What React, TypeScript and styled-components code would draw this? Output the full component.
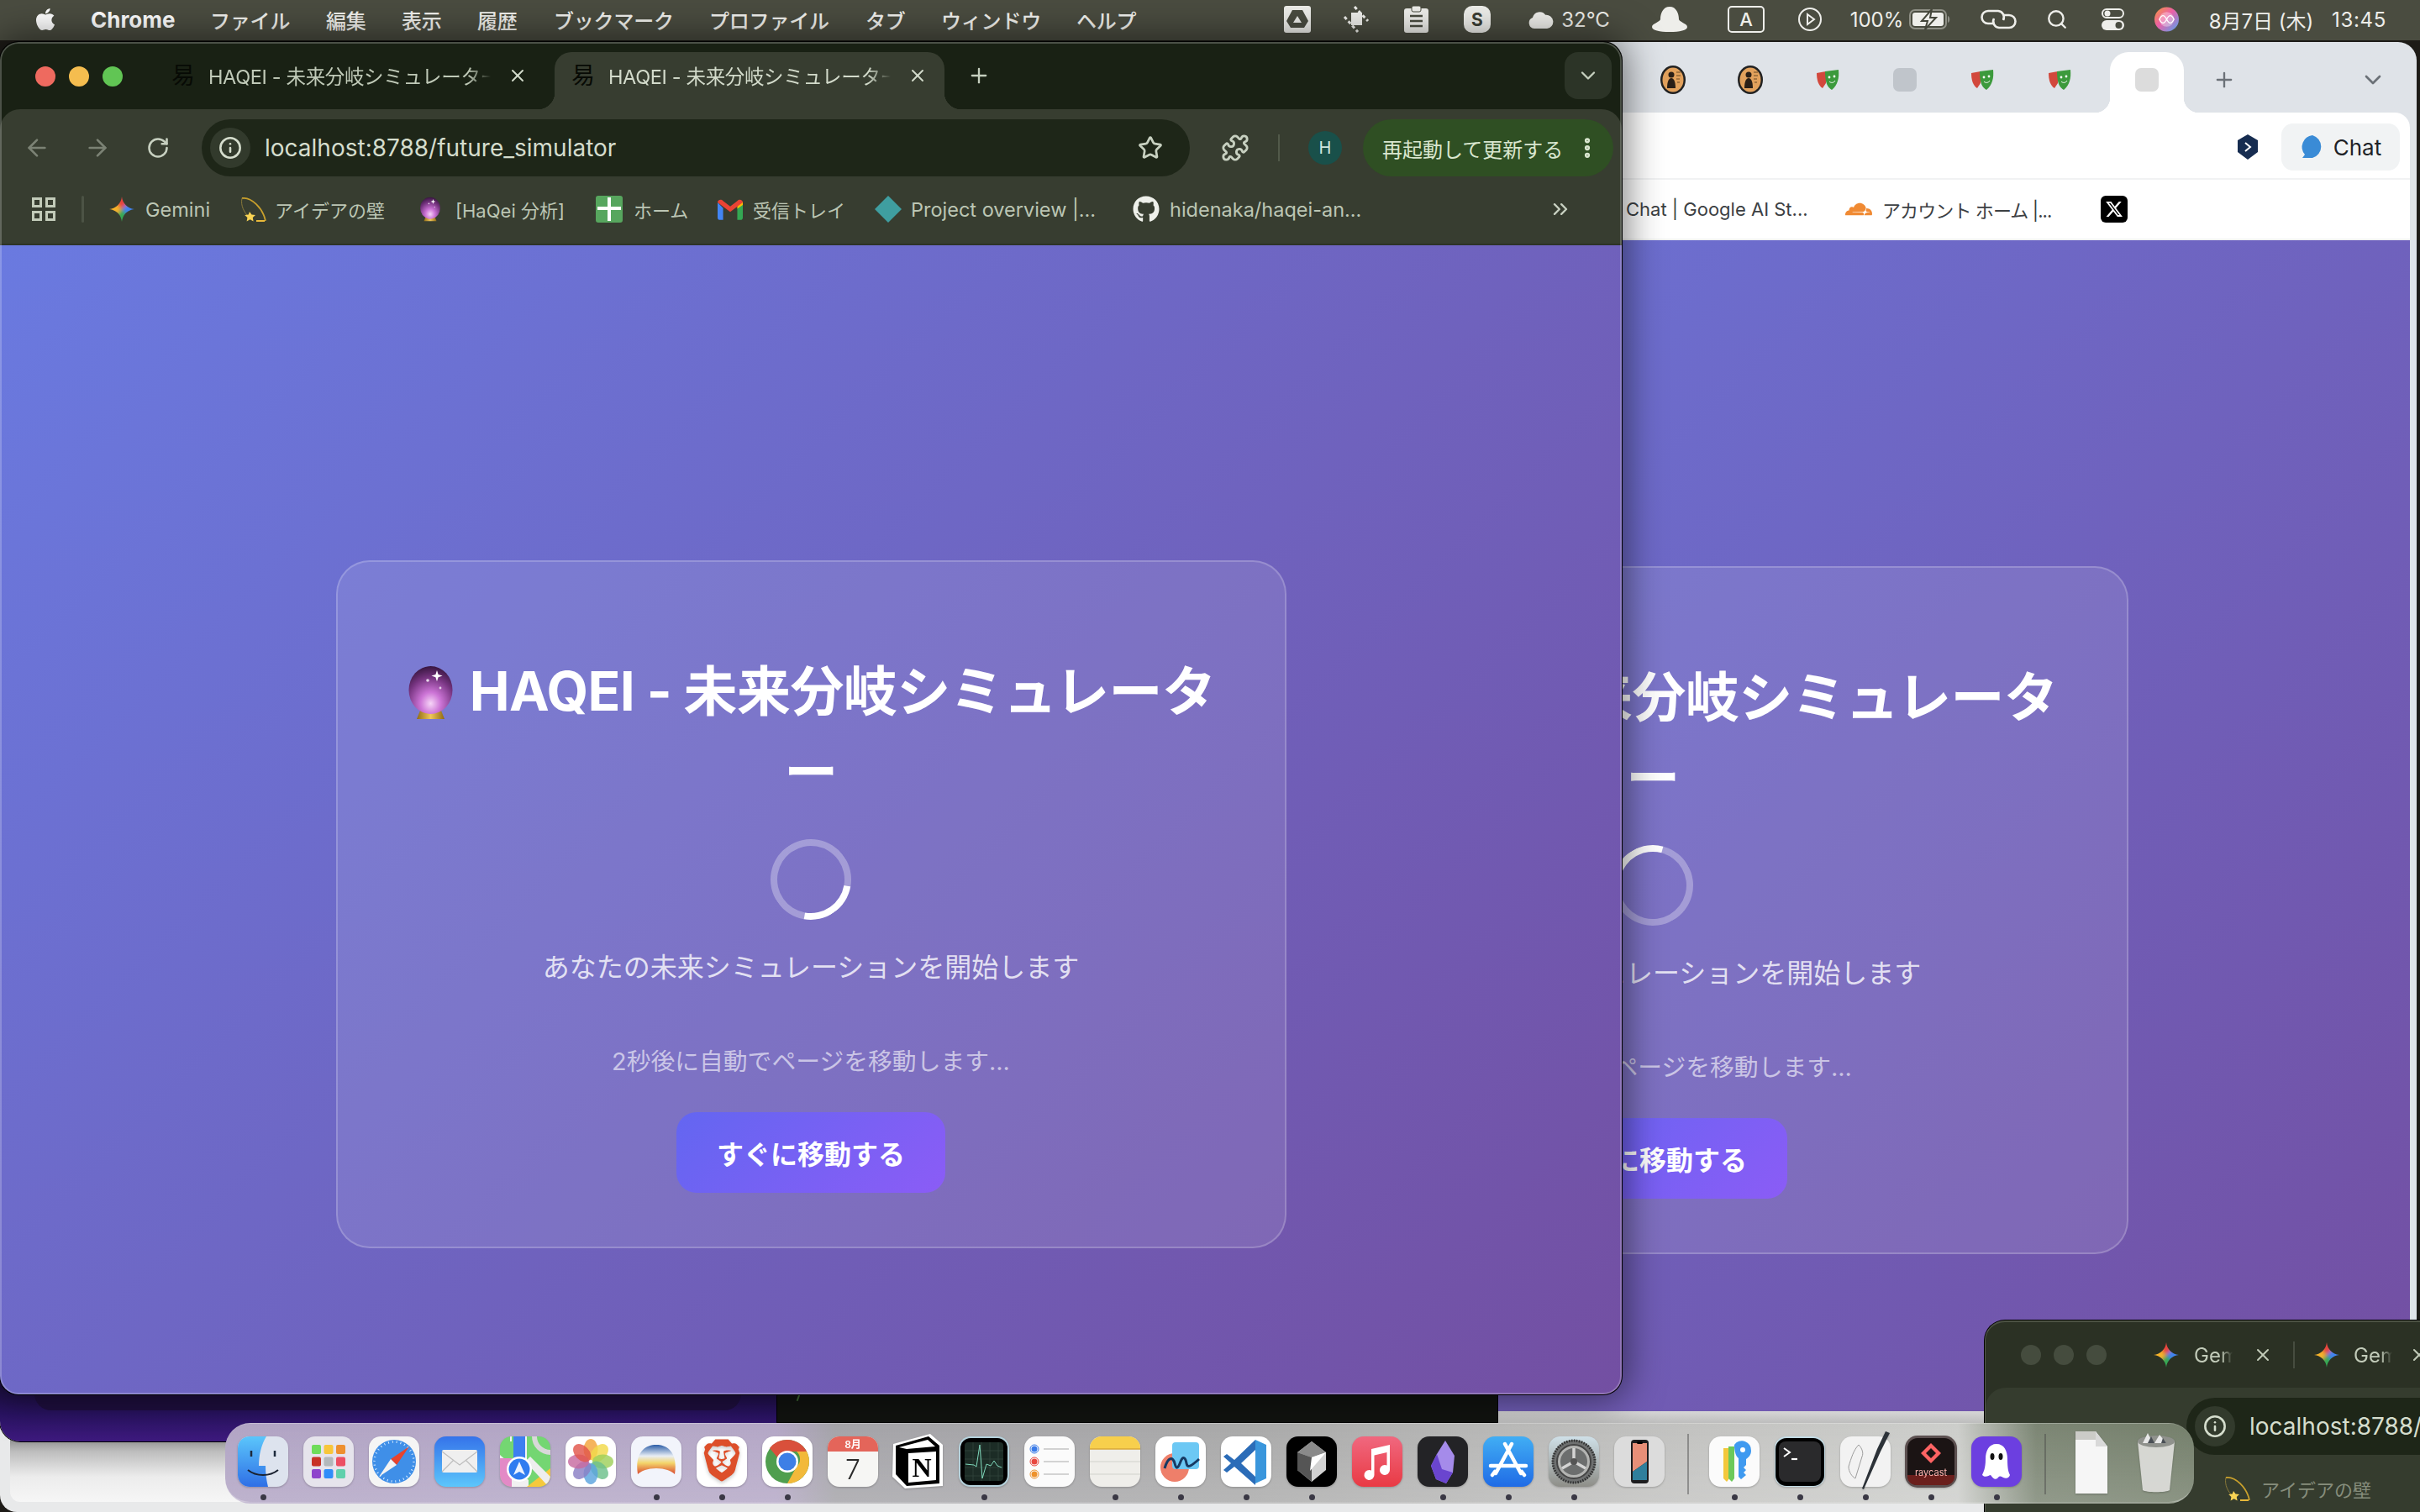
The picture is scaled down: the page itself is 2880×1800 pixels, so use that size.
import React from 'react';
import styled, { createGlobalStyle } from 'styled-components';
import { ArrowLeft, ArrowRight, RotateCw, Info, Star, Puzzle, EllipsisVertical, Plus, X, ChevronDown, ChevronsRight, Search } from 'lucide-react';
import { FaApple, FaGithub } from 'react-icons/fa';
import { FaXTwitter } from 'react-icons/fa6';
import { SiBrave, SiCloudflare } from 'react-icons/si';

const SANS = '"Inter","Noto Sans CJK JP","Noto Sans",sans-serif';

const Global = createGlobalStyle`
  html, body { margin: 0; padding: 0; background: #1d1b17; }
  * { box-sizing: border-box; }
`;

const Desktop = styled.div`
  position: relative;
  width: 2880px;
  height: 1800px;
  overflow: hidden;
  font-family: ${SANS};
  background: #1d1b17;
`;

/* ---------- menu bar ---------- */
const MenuBar = styled.header`
  display: flex;
  align-items: center;
  height: 48px;
  padding: 0 38px 2px 0;
  background: #4a4c40;
  color: #f2f2ee;
  font-size: 24px;
`;
const MenuApple = styled.span`
  display: flex;
  margin-left: 40px;
  width: 28px;
  color: #fff;
`;
const MenuApp = styled.span`
  margin-left: 40px;
  width: 102px;
  font-size: 26px;
  font-weight: 700;
  white-space: nowrap;
  color: #fff;
`;
const MenuLabel = styled.span<{ $w: number; $ml: number }>`
  width: ${p => p.$w}px;
  margin-left: ${p => p.$ml}px;
  white-space: nowrap;
  font-weight: 500;
  letter-spacing: -0.2px;
`;
const MenuRight = styled.div`
  display: flex;
  align-items: center;
  margin-left: auto;
`;
const MenuSlot = styled.span<{ $w: number; $ml: number; $ls?: number }>`
  display: flex;
  align-items: center;
  justify-content: center;
  width: ${p => p.$w}px;
  margin-left: ${p => p.$ml}px;
  letter-spacing: ${p => p.$ls ?? 0}px;
  white-space: nowrap;
  font-weight: 400;
  color: #eeeeea;
`;

/* ---------- windows on the desktop ---------- */
const WhiteBase = styled.section`
  position: absolute;
  left: 0;
  top: 1600px;
  width: 2876px;
  height: 200px;
  background: #e8e9ea;
  border-radius: 0 0 0 20px;
  padding: 0 8px 12px 12px;
`;
const WhitePanel = styled.div`
  height: 100%;
  border-radius: 0 0 12px 12px;
  background: linear-gradient(180deg, #8e8e8e 0, #8e8e8e 60%, #bdbdbd 68%, #ececec 84%, #f6f6f6 100%);
`;
const PurpleWindow = styled.section`
  position: absolute;
  left: 0;
  top: 1500px;
  width: 925px;
  height: 216px;
  border-radius: 0 0 0 24px;
  background: linear-gradient(180deg, #1d0f42 70%, #2a1364 85%, #3e1a7e 100%);
  box-shadow: 0 0 0 1px #000;
  display: flex;
  flex-direction: column;
  justify-content: flex-end;
  padding: 0 43px 37px 41px;
`;
const PurpleInset = styled.div`
  height: 20px;
  background: #1f0f40;
  border-radius: 0 0 20px 20px;
`;
const TerminalWindow = styled.section`
  position: absolute;
  left: 925px;
  top: 1500px;
  width: 857px;
  height: 193px;
  background: #111310;
  box-shadow: 0 0 0 1px #000;
`;
const TerminalTick = styled.i`
  position: absolute;
  left: 24px;
  top: 160px;
  width: 2px;
  height: 8px;
  background: #3f6a33;
  transform: rotate(20deg);
`;

const RightWindow = styled.section`
  position: absolute;
  left: 1066px;
  top: 50px;
  width: 1810px;
  height: 1644px;
  padding-right: 8px;
  background: #dfe3e8;
  border-radius: 0 22px 0 0;
  display: flex;
  flex-direction: column;
`;
const RightFoot = styled.div`
  height: 14px;
  flex-shrink: 0;
  background: linear-gradient(180deg, #d6d6d6, #bdbdbd);
`;
const RightTabs = styled.div`
  display: flex;
  height: 84px;
  padding: 12px 0 0 879px;
  flex-shrink: 0;
  width: 1810px;
`;
const FaviconSlot = styled.div`
  width: 92px;
  display: flex;
  align-items: center;
  justify-content: center;
  padding-bottom: 6px;
`;
const GreyFavicon = styled.i<{ $c: string }>`
  width: 28px;
  height: 28px;
  border-radius: 7px;
  background: ${p => p.$c};
`;
const RightActiveTab = styled.div`
  position: relative;
  width: 88px;
  margin-left: 14px;
  background: #fff;
  border-radius: 22px 22px 0 0;
  display: flex;
  align-items: center;
  justify-content: center;
  padding-bottom: 6px;
  &::before, &::after {
    content: '';
    position: absolute;
    bottom: 0;
    width: 18px;
    height: 18px;
  }
  &::before { left: -18px; background: radial-gradient(circle at 0 0, transparent 18px, #fff 18.5px); }
  &::after { right: -18px; background: radial-gradient(circle at 100% 0, transparent 18px, #fff 18.5px); }
`;
const RightTabTool = styled.div<{ $ml: string; $mr?: number }>`
  width: 48px;
  margin-left: ${p => p.$ml};
  margin-right: ${p => p.$mr ?? 0}px;
  display: flex;
  align-items: center;
  justify-content: center;
  padding-bottom: 6px;
  color: #6b7177;
`;
const RightToolbar = styled.div`
  display: flex;
  align-items: center;
  justify-content: flex-end;
  gap: 27px;
  height: 78px;
  padding: 4px 12px 0 0;
  background: #fff;
  border-radius: 0 18px 0 0;
  flex-shrink: 0;
`;
const ChatButton = styled.div`
  display: flex;
  align-items: center;
  justify-content: center;
  gap: 10px;
  width: 141px;
  height: 56px;
  border-radius: 14px;
  background: #f1f3f4;
  color: #1f2328;
  font-size: 26px;
`;
const RightBookmarks = styled.div`
  display: flex;
  align-items: center;
  height: 74px;
  padding-left: 869px;
  border-top: 2px solid #f1f2f3;
  border-bottom: 2px solid #f1f2f3;
  background: #fff;
  color: #3c4043;
  font-size: 22px;
  flex-shrink: 0;
`;

const ChromeWindow = styled.section`
  position: absolute;
  left: 0;
  top: 50px;
  width: 1930px;
  height: 1610px;
  display: flex;
  flex-direction: column;
  overflow: hidden;
  background: #192114;
  border-radius: 22px;
  box-shadow: 0 0 0 1px #000, 0 0 44px 6px rgba(0, 0, 0, 0.5);
  &::after {
    content: '';
    position: absolute;
    inset: 0;
    border: 2px solid rgba(255, 255, 255, 0.22);
    border-radius: 22px;
    pointer-events: none;
  }
`;
const TabStrip = styled.div`
  display: flex;
  align-items: stretch;
  height: 80px;
  padding: 12px 12px 0 0;
  flex-shrink: 0;
`;
const Lights = styled.div`
  display: flex;
  gap: 16px;
  width: 184px;
  padding: 17px 0 0 42px;
`;
const Light = styled.i<{ $c: string }>`
  width: 24px;
  height: 24px;
  border-radius: 50%;
  background: ${p => p.$c};
`;
const Tab = styled.div<{ $active?: boolean }>`
  position: relative;
  display: flex;
  align-items: center;
  width: 464px;
  margin-right: 12px;
  padding: 0 0 12px 20px;
  color: ${p => (p.$active ? '#d3dbcb' : '#c0cab8')};
  background: ${p => (p.$active ? '#373d30' : 'transparent')};
  border-radius: 20px 20px 0 0;
  font-size: 23.5px;
  ${p => p.$active && `
    &::before, &::after {
      content: '';
      position: absolute;
      bottom: 0;
      width: 20px;
      height: 20px;
    }
    &::before { left: -20px; background: radial-gradient(circle at 0 0, transparent 20px, #373d30 20.5px); }
    &::after { right: -20px; background: radial-gradient(circle at 100% 0, transparent 20px, #373d30 20.5px); }
  `}
`;
const TabFavicon = styled.span`
  width: 26px;
  margin-right: 18px;
  font-size: 28px;
  line-height: 1;
  color: #070a05;
  white-space: nowrap;
  flex-shrink: 0;
`;
const TabTitle = styled.span`
  width: 336px;
  overflow: hidden;
  white-space: nowrap;
  letter-spacing: -0.35px;
  -webkit-mask-image: linear-gradient(90deg, #000 92%, transparent 100%);
  mask-image: linear-gradient(90deg, #000 92%, transparent 100%);
`;
const TabClose = styled.span`
  display: flex;
  margin-left: 20px;
  color: #d3dbcb;
`;
const NewTab = styled.span`
  display: flex;
  align-items: center;
  margin-left: 15px;
  padding-bottom: 12px;
  color: #c5cfbe;
`;
const TabMenu = styled.span`
  display: flex;
  align-items: center;
  justify-content: center;
  margin-left: auto;
  width: 56px;
  height: 56px;
  border-radius: 16px;
  background: #2c3427;
  color: #c5cfbe;
`;
const Toolbar = styled.div`
  display: flex;
  align-items: center;
  height: 80px;
  padding-top: 12px;
  background: #373d30;
  border-radius: 24px 24px 0 0;
  flex-shrink: 0;
`;
const ToolIcon = styled.span<{ $w: number; $ml: number; $dim?: boolean }>`
  display: flex;
  justify-content: center;
  width: ${p => p.$w}px;
  margin-left: ${p => p.$ml}px;
  color: ${p => (p.$dim ? '#7b8274' : '#c7d0c0')};
`;
const AddressBar = styled.div<{ $w: number; $ml: number }>`
  display: flex;
  align-items: center;
  width: ${p => p.$w}px;
  height: 68px;
  margin-left: ${p => p.$ml}px;
  padding: 0 32px 0 10px;
  border-radius: 34px;
  background: #1e2618;
  color: #d5ddcd;
  font-size: 28px;
  white-space: nowrap;
  flex-shrink: 0;
`;
const InfoChip = styled.span`
  display: flex;
  align-items: center;
  justify-content: center;
  width: 48px;
  height: 48px;
  margin-right: 17px;
  border-radius: 50%;
  background: #323a2c;
  color: #d5ddcd;
  flex-shrink: 0;
`;
const AddressStar = styled.span`
  display: flex;
  margin-left: auto;
  color: #c7d0c0;
`;
const ToolDivider = styled.i`
  width: 2px;
  height: 32px;
  margin-left: 33px;
  background: #525a4a;
`;
const Avatar = styled.span`
  display: flex;
  align-items: center;
  justify-content: center;
  width: 40px;
  height: 40px;
  margin-left: 34px;
  border-radius: 50%;
  background: #19504a;
  color: #cfe6df;
  font-size: 20px;
`;
const UpdatePill = styled.div`
  display: flex;
  align-items: center;
  width: 298px;
  height: 68px;
  margin-left: 25px;
  padding-left: 23px;
  border-radius: 34px;
  background: #2f4f23;
  color: #d9e6cf;
  font-size: 24px;
  white-space: nowrap;
`;
const PillDots = styled.span`
  display: flex;
  margin-left: 14px;
`;
const BookmarkBar = styled.div`
  display: flex;
  align-items: center;
  height: 82px;
  padding-bottom: 2px;
  border-bottom: 2px solid #2d3327;
  background: #373d30;
  color: #bcc6b4;
  font-size: 22px;
  flex-shrink: 0;
`;
const AppsIcon = styled.span`
  display: flex;
  margin-left: 38px;
`;
const BarDivider = styled.i`
  width: 3px;
  height: 32px;
  margin-left: 31px;
  background: #4c5345;
  border-radius: 2px;
`;
const MarkIcon = styled.span<{ $w: number; $ml: number }>`
  display: flex;
  align-items: center;
  justify-content: center;
  width: ${p => p.$w}px;
  margin-left: ${p => p.$ml}px;
  flex-shrink: 0;
`;
const MarkBall = styled.span`
  display: block;
  width: 26px;
  height: 30px;
`;
const MarkText = styled.span<{ $ml: number; $w: number; $fs?: number; $ls?: number }>`
  margin-left: ${p => p.$ml}px;
  width: ${p => p.$w}px;
  font-size: ${p => p.$fs ?? 22}px;
  letter-spacing: ${p => p.$ls ?? 0}px;
  white-space: nowrap;
  flex-shrink: 0;
`;
const XBadge = styled.span`
  display: flex;
  align-items: center;
  justify-content: center;
  width: 32px;
  height: 32px;
  border-radius: 6px;
  background: #000;
  color: #fff;
`;
const GradientStage = styled.main<{ $top: number }>`
  flex: 1;
  display: flex;
  justify-content: center;
  align-items: flex-start;
  padding-top: ${p => p.$top}px;
  background: linear-gradient(135deg, #6a7ae0 0%, #734fa2 100%);
  overflow: hidden;
`;
const Card = styled.div`
  width: 1131px;
  height: 819px;
  padding: 106px 64px 0;
  border: 2px solid rgba(255, 255, 255, 0.2);
  border-radius: 40px;
  background: rgba(255, 255, 255, 0.1);
  color: #fff;
  display: flex;
  flex-direction: column;
  align-items: center;
  text-align: center;
  flex-shrink: 0;
`;
const Title = styled.h1`
  margin: 0;
  font-size: 64px;
  line-height: 96px;
  font-weight: 700;
  letter-spacing: -0.6px;
  white-space: nowrap;
  font-family: ${SANS};
`;
const TitleBall = styled.span`
  display: inline-block;
  width: 57px;
  height: 63px;
  margin-right: 18px;
  vertical-align: -10px;
`;
const Spinner = styled.div<{ $angle: number }>`
  width: 96px;
  height: 96px;
  margin-top: 32px;
  border: 8px solid rgba(255, 255, 255, 0.3);
  border-top-color: #fff;
  border-radius: 50%;
  transform: rotate(${p => p.$angle}deg);
  flex-shrink: 0;
`;
const Subtitle = styled.p`
  margin: 33px 0 0;
  font-size: 32px;
  line-height: 48px;
  font-weight: 400;
  color: rgba(255, 255, 255, 0.8);
`;
const Redirect = styled.p`
  margin: 66px 0 0;
  font-size: 28.8px;
  line-height: 43px;
  color: rgba(255, 255, 255, 0.6);
`;
const GoButton = styled.button`
  width: 320px;
  height: 96px;
  margin-top: 39px;
  border: 0;
  border-radius: 24px;
  color: #fff;
  font-family: ${SANS};
  font-size: 32px;
  font-weight: 700;
  background: linear-gradient(135deg, #6366f1 0%, #8b5cf6 100%);
`;

/* small window at the bottom right */
const SmallWindow = styled.section`
  position: absolute;
  left: 2362px;
  top: 1572px;
  width: 560px;
  height: 240px;
  overflow: hidden;
  background: #2b3124;
  border-top: 2px solid #4b5143;
  border-left: 1px solid #55594c;
  border-radius: 24px 0 0 0;
  box-shadow: 0 0 0 1px #000;
  color: #c2cbb9;
`;
const SmallTabs = styled.div`
  display: flex;
  align-items: center;
  height: 78px;
  padding-left: 42px;
  font-size: 24px;
`;
const SmallLight = styled.i`
  width: 24px;
  height: 24px;
  margin-right: 15px;
  border-radius: 50%;
  background: #454c3e;
`;
const SmallTabText = styled.span<{ $ml: number }>`
  width: 46px;
  margin-left: ${p => p.$ml}px;
  overflow: hidden;
  white-space: nowrap;
  -webkit-mask-image: linear-gradient(90deg, #000 70%, transparent 100%);
  mask-image: linear-gradient(90deg, #000 70%, transparent 100%);
`;
const SmallDivider = styled.i`
  width: 2px;
  height: 32px;
  margin-left: 24px;
  background: #474d40;
`;
const SmallToolbar = styled.div`
  display: flex;
  align-items: center;
  height: 80px;
  padding: 12px 0 0 239px;
  background: #353c2e;
  border-radius: 24px 0 0 0;
`;
const SmallMarks = styled.div`
  display: flex;
  align-items: center;
  height: 80px;
  background: #353c2e;
  color: #868d7c;
  font-size: 22px;
`;

/* ---------- dock ---------- */
const Dock = styled.nav`
  position: absolute;
  left: 268px;
  top: 1694px;
  width: 2343px;
  height: 96px;
  display: flex;
  gap: 18px;
  padding: 15px 0 0 15px;
  border-radius: 30px;
  background:
    linear-gradient(180deg, rgba(255, 255, 255, 0) 0%, rgba(255, 255, 255, 0.16) 100%),
    linear-gradient(90deg, #b1a4c4 0%, #b4a7c6 28%, #a4a3a8 31%, #a9a9a9 52%, #c2c2c0 74%, #cdcecb 88%, #7c8674 92%, #75806c 100%);
  border-top: 1px solid rgba(255, 255, 255, 0.12);
  border-bottom: 2px solid rgba(255, 255, 255, 0.28);
`;
const DockTile = styled.div`
  width: 60px;
  display: flex;
  flex-direction: column;
  align-items: center;
  gap: 9px;
  flex-shrink: 0;
  svg { display: block; overflow: visible; filter: drop-shadow(0 1px 1px rgba(0, 0, 0, 0.22)); }
`;
const DockDot = styled.i<{ $on: boolean }>`
  width: 7px;
  height: 7px;
  border-radius: 50%;
  background: ${p => (p.$on ? '#3a3845' : 'transparent')};
`;
const DockDivider = styled.i<{ $mr: number }>`
  width: 2px;
  height: 72px;
  margin: -3px ${p => p.$mr}px 0 9px;
  background: rgba(70, 70, 70, 0.45);
  flex-shrink: 0;
`;

/* ---------- drawings ---------- */
const Crystal = () => (
  <svg viewBox="0 0 57 63" width="100%" height="100%">
    <defs>
      <radialGradient id="ballFill" cx="50%" cy="78%" r="78%">
        <stop offset="0" stopColor="#f6d4f7" />
        <stop offset="0.3" stopColor="#cc74d6" />
        <stop offset="0.7" stopColor="#75337f" />
        <stop offset="1" stopColor="#37163f" />
      </radialGradient>
      <linearGradient id="ballBase" x1="0" x2="1">
        <stop offset="0" stopColor="#8f6a14" />
        <stop offset="0.5" stopColor="#f0c75a" />
        <stop offset="1" stopColor="#8f6a14" />
      </linearGradient>
    </defs>
    <path d="M16 53h25l4 10H12z" fill="url(#ballBase)" />
    <ellipse cx="28.500" cy="28.500" rx="26" ry="28.500" fill="url(#ballFill)" />
    <path d="M36 5l1.600 5 5 1.600-5 1.600-1.600 5-1.600-5-5-1.600 5-1.600z" fill="#fff" />
    <circle cx="25" cy="17" r="1.800" fill="#fff" opacity="0.8" />
    <circle cx="40" cy="26" r="1.400" fill="#fff" opacity="0.7" />
  </svg>
);
const Gem = ({ s }: { s: number }) => (
  <svg viewBox="0 0 24 24" width={s} height={s}>
    <defs>
      <clipPath id="gemClip">
        <path d="M12 0C12.600 6.500 17.500 11.400 24 12C17.500 12.600 12.600 17.500 12 24C11.400 17.500 6.500 12.600 0 12C6.500 11.400 11.400 6.500 12 0Z" />
      </clipPath>
      <filter id="gemBlur" x="-20%" y="-20%" width="140%" height="140%"><feGaussianBlur stdDeviation="1.600" /></filter>
    </defs>
    <g clipPath="url(#gemClip)">
      <g filter="url(#gemBlur)">
        <path d="M12 12L-2-2h28z" fill="#e8453c" />
        <path d="M12 12L26-2v28z" fill="#3f83f0" />
        <path d="M12 12l14 14H-2z" fill="#34a853" />
        <path d="M12 12L-2 26V-2z" fill="#f7b32b" />
      </g>
    </g>
  </svg>
);
const WallMark = () => (
  <svg viewBox="0 0 32 32" width="32" height="32">
    <path d="M3 3C14 1 28 15 31 30" fill="none" stroke="#c9a02c" strokeWidth="1.800" />
    <path d="M3 3C1 12 6 20 10 24" fill="none" stroke="#8a7a3a" strokeWidth="1" />
    <path d="M12 19l2.500 3.500 4.500.5-3.200 3 .8 4.500-4-2.200-4 2.200 .8-4.500-3.200-3 4.500-.5z" fill="#f7d354" />
    <path d="M20 29h10v2H20z" fill="#e8b93a" />
  </svg>
);
const Grid4 = () => (
  <svg viewBox="0 0 28 28" width="28" height="28" fill="none" stroke="#c2cbb9" strokeWidth="3">
    <rect x="1.500" y="1.500" width="9" height="9" />
    <rect x="17.500" y="1.500" width="9" height="9" />
    <rect x="1.500" y="17.500" width="9" height="9" />
    <rect x="17.500" y="17.500" width="9" height="9" />
  </svg>
);
const SheetMark = () => (
  <svg viewBox="0 0 32 32" width="32" height="32">
    <rect width="32" height="32" rx="3" fill="#57a65e" />
    <path d="M14 2h4v11h12v4H18v13h-4V17H2v-4h12z" fill="#fff" />
  </svg>
);
const GmailMark = () => (
  <svg viewBox="0 0 32 26" width="30" height="25">
    <path d="M0 4v19a3 3 0 0 0 3 3h4V11z" fill="#4285f4" />
    <path d="M32 4v19a3 3 0 0 1-3 3h-4V11z" fill="#34a853" />
    <path d="M25 3l7 0-0 4-7 5z" fill="#fbbc04" />
    <path d="M0 4c0-3 4-5 7-2l9 7 9-7c3-3 7-1 7 2l-16 12z" fill="#ea4335" />
  </svg>
);
const Diamond = () => (
  <svg viewBox="0 0 32 32" width="32" height="32"><path d="M16 0l16 16-16 16L0 16z" fill="#3f9ea0" /></svg>
);
const PortraitFav = () => (
  <svg viewBox="0 0 30 34" width="30" height="34">
    <ellipse cx="15" cy="17" rx="15" ry="17" fill="#222" />
    <ellipse cx="15" cy="17" rx="12.500" ry="14.500" fill="#e2a15c" />
    <circle cx="13" cy="11" r="3.500" fill="#2a1f17" />
    <path d="M8 27c0-8 2-12 5-12s5 4 5 12z" fill="#2a1f17" />
    <path d="M19 8h5M19 12h5M19 16h4M20 20h3" stroke="#6b4a25" strokeWidth="1" />
  </svg>
);
const ShieldFav = () => (
  <svg viewBox="0 0 28 24" width="28" height="24">
    <path d="M1 4l11-2v14l-4 6C3 19 1 12 1 4z" fill="#d2483c" />
    <path d="M11 2l16-2c1 10-1 18-8 24-5-3-8-8-8-22z" fill="#3c9a3c" />
    <circle cx="16" cy="9" r="1.400" fill="#fff" />
    <circle cx="22" cy="8" r="1.400" fill="#fff" />
    <path d="M16 14c2 2 5 2 7-1" stroke="#fff" fill="none" strokeWidth="1" />
  </svg>
);
const HexLogo = () => (
  <svg viewBox="0 0 26 30" width="26" height="30">
    <path d="M13 0l12 7v14l-12 9-12-9V7z" fill="#162c50" />
    <path d="M10 10l6 5-6 5" fill="none" stroke="#fff" strokeWidth="2" />
  </svg>
);
const ChatBubble = () => (
  <svg viewBox="0 0 30 30" width="30" height="30">
    <path d="M15 1a14 14 0 0 1 0 27H3l3-4A14 14 0 0 1 15 1z" fill="#3a8bd6" />
  </svg>
);

/* menu bar icons */
const MI = styled.svg`
  display: block;
  fill: #eeeeea;
`;
const DriveGlyph = () => (
  <MI viewBox="0 0 32 32" width="32" height="32">
    <rect width="32" height="32" rx="3" />
    <path d="M10 5h12l7 13-5 8H8L3 18z" fill="#4a4c40" />
    <path d="M16 12l5 8H11z" fill="#eeeeea" />
  </MI>
);
const RotateGlyph = () => (
  <MI viewBox="0 0 32 32" width="32" height="32">
    <rect x="10" y="8" width="13" height="15" />
    <path d="M14 1l16 17M2 13l16 18" stroke="#eeeeea" strokeWidth="3" strokeDasharray="4 3" fill="none" />
  </MI>
);
const ClipGlyph = () => (
  <MI viewBox="0 0 29 32" width="29" height="32">
    <rect y="3" width="29" height="29" rx="3" />
    <rect x="9" width="11" height="7" rx="2" stroke="#4a4c40" />
    <path d="M7 12h15M7 18h15M7 24h15" stroke="#4a4c40" strokeWidth="2.500" />
  </MI>
);
const SGlyph = styled.span`
  display: flex;
  align-items: center;
  justify-content: center;
  width: 32px;
  height: 32px;
  border-radius: 10px;
  background: #eeeeea;
  color: #3d3f35;
  font-size: 21px;
  font-weight: 700;
`;
const CloudGlyph = () => (
  <MI viewBox="0 0 32 22" width="31" height="21">
    <path d="M8 22a7 7 0 0 1-2-13.500A9 9 0 0 1 22 5a8 8 0 0 1 2 17z" />
  </MI>
);
const BellGlyph = () => (
  <MI viewBox="0 0 42 30" width="42" height="30">
    <path d="M21 0c8 0 11 8 11 15 0 3 10 5 10 9 0 4-9 6-21 6S0 28 0 24c0-4 10-6 10-9C10 8 13 0 21 0z" />
  </MI>
);
const AGlyph = styled.span`
  display: flex;
  align-items: center;
  justify-content: center;
  width: 44px;
  height: 32px;
  border: 2px solid #eeeeea;
  border-radius: 5px;
  font-size: 22px;
  font-weight: 500;
`;
const PlayGlyph = () => (
  <svg viewBox="0 0 28 28" width="28" height="28" fill="none" stroke="#eeeeea" strokeWidth="2">
    <circle cx="14" cy="14" r="13" />
    <path d="M11 8l8 6-8 6z" />
  </svg>
);
const BatteryGlyph = () => (
  <svg viewBox="0 0 50 24" width="50" height="24">
    <rect x="1" y="1" width="43" height="22" rx="6" fill="none" stroke="#8f9086" strokeWidth="2" />
    <rect x="4" y="4" width="37" height="16" rx="3" fill="#eeeeea" />
    <path d="M46 8c3 1 3 7 0 8z" fill="#8f9086" />
    <path d="M27 0L15 14h7l-3 10 13-14h-7z" fill="#eeeeea" stroke="#44463a" strokeWidth="2" />
  </svg>
);
const LinkGlyph = () => (
  <svg viewBox="0 0 43 24" width="43" height="24" fill="none" stroke="#eeeeea" strokeWidth="2.600">
    <path d="M15 17H9A7.500 7.500 0 0 1 9 2h12a7.500 7.500 0 0 1 6 11" />
    <path d="M28 7h6a7.500 7.500 0 0 1 0 15H22a7.500 7.500 0 0 1-6-11" />
  </svg>
);
const ControlGlyph = () => (
  <svg viewBox="0 0 27 26" width="27" height="26">
    <rect x="1" y="1" width="25" height="10" rx="5" fill="none" stroke="#eeeeea" strokeWidth="2" />
    <circle cx="7" cy="6" r="3.500" fill="#eeeeea" />
    <rect y="14" width="27" height="12" rx="6" fill="#eeeeea" />
    <circle cx="20.500" cy="20" r="4" fill="#4a4c40" />
  </svg>
);
const SiriGlyph = () => (
  <svg viewBox="0 0 30 30" width="29" height="30">
    <defs>
      <linearGradient id="siriG" x1="0" y1="0" x2="1" y2="1">
        <stop offset="0" stopColor="#f59a3a" />
        <stop offset="0.45" stopColor="#ec5fa6" />
        <stop offset="1" stopColor="#4da8f5" />
      </linearGradient>
    </defs>
    <circle cx="15" cy="15" r="15" fill="url(#siriG)" />
    <circle cx="15" cy="15" r="9" fill="#fff" opacity="0.35" />
    <path d="M6 15c3-6 6-6 9 0s6 6 9 0c-3-6-6-6-9 0s-6 6-9 0z" fill="none" stroke="#fff" strokeWidth="1.400" />
  </svg>
);

/* dock icons, all on a 60 unit tile */
const Tile = ({ bg, children }: { bg: string; children?: React.ReactNode }) => (
  <svg viewBox="0 0 60 60" width="60" height="60">
    <rect width="60" height="60" rx="14" fill={bg} />
    {children}
  </svg>
);
const Finder = () => (
  <svg viewBox="0 0 60 60" width="60" height="60">
    <defs>
      <linearGradient id="fBlue" x1="0" x2="0" y1="0" y2="1"><stop offset="0" stopColor="#5bc6fb" /><stop offset="1" stopColor="#2f6fe6" /></linearGradient>
    </defs>
    <rect width="60" height="60" rx="14" fill="#dde3ee" />
    <path d="M14 0h20c-6 10-9 22-9 35h8c0 9 1 17 3 25H14A14 14 0 0 1 0 46V14A14 14 0 0 1 14 0z" fill="url(#fBlue)" />
    <path d="M16 17v7M44 17v7" stroke="#1d2a3c" strokeWidth="2.500" />
    <path d="M12 40c10 8 26 8 36 0" fill="none" stroke="#1a2230" strokeWidth="2" />
  </svg>
);
const Launchpad = () => {
  const cols = ['#6fdc5a', '#f8c63a', '#ee8f2f', '#c83226', '#b3b8bb', '#ec4f63', '#8e44cc', '#2f8dfa', '#5fd0ac'];
  return (
    <Tile bg="#e6e4ec">
      {cols.map((c, i) => <rect key={c} x={10 + (i % 3) * 14.500} y={10 + Math.floor(i / 3) * 14.500} width="11" height="11" rx="2" fill={c} />)}
    </Tile>
  );
};
const Safari = () => (
  <Tile bg="#f5f5f5">
    <circle cx="30" cy="30" r="26" fill="#3f8fe8" />
    <circle cx="30" cy="30" r="23.500" fill="none" stroke="#d8ecff" strokeWidth="2.500" strokeDasharray="1 3.900" />
    <path d="M48 12L26 27l7 7z" fill="#e8432e" />
    <path d="M12 48l14-21 7 7z" fill="#f3f3f3" />
  </Tile>
);
const Mail = () => (
  <svg viewBox="0 0 60 60" width="60" height="60">
    <defs><linearGradient id="mailB" x1="0" x2="0" y1="0" y2="1"><stop offset="0" stopColor="#3573ea" /><stop offset="1" stopColor="#5cc6fb" /></linearGradient></defs>
    <rect width="60" height="60" rx="14" fill="url(#mailB)" />
    <rect x="9" y="16" width="42" height="27" rx="2" fill="#efefef" />
    <path d="M9 18l21 16 21-16M9 42l14-14M51 42L37 28" fill="none" stroke="#bdbdbd" strokeWidth="1.200" />
  </svg>
);
const Maps = () => (
  <svg viewBox="0 0 60 60" width="60" height="60">
    <clipPath id="mapC"><rect width="60" height="60" rx="14" /></clipPath>
    <g clipPath="url(#mapC)">
      <rect width="60" height="60" fill="#74d672" />
      <path d="M0 22l34 30v8H14L0 46z" fill="#f1f1f1" />
      <path d="M0 26h14v34H0z" fill="#e38ac6" />
      <path d="M32 60l28-22v22z" fill="#f5c93c" />
      <path d="M16 0h14v30H16z" fill="#3d7ff0" />
      <path d="M12 0v6l2 0V0zM32 0h-2v30h2z" fill="#f3f3f3" />
      <path d="M38 0a22 22 0 0 0 22 22v-6A16 16 0 0 1 44 0z" fill="#d8d8d8" />
      <path d="M58 60L30 30l6-6 24 24z" fill="#eeeeee" />
    </g>
    <circle cx="23" cy="39" r="15" fill="#fff" />
    <circle cx="23" cy="39" r="12.500" fill="#2f7cf0" />
    <path d="M23 30l7 16-7-4-7 4z" fill="#eaf2ff" />
  </svg>
);
const Photos = () => {
  const cols = ['#f3a33a', '#f2d94a', '#9fcf5a', '#6cc08b', '#5aa4de', '#8a7fc4', '#c76aa0', '#e2564b'];
  return (
    <Tile bg="#fff">
      {cols.map((c, i) => <ellipse key={c} cx="30" cy="15.500" rx="8.500" ry="12.500" fill={c} opacity="0.82" transform={`rotate(${i * 45} 30 30)`} />)}
    </Tile>
  );
};
const Dome = () => (
  <svg viewBox="0 0 60 60" width="60" height="60">
    <defs><linearGradient id="domeG" x1="0" x2="0" y1="0" y2="1">
      <stop offset="0" stopColor="#2d5ea8" /><stop offset="0.38" stopColor="#e8eef5" /><stop offset="0.62" stopColor="#f4d56a" /><stop offset="1" stopColor="#d9482f" />
    </linearGradient></defs>
    <rect width="60" height="60" rx="14" fill="#f2f4fb" />
    <path d="M8 45C4 20 16 10 30 10s26 10 22 35c-4-4-12-7-22-7s-18 3-22 7z" fill="url(#domeG)" />
  </svg>
);
const Brave = () => (
  <Tile bg="#fff"><g transform="translate(5 3.500) scale(2.080)"><SiBrave size={24} color="#dd4f2a" /></g></Tile>
);
const ChromeMark = () => (
  <Tile bg="#fff">
    <circle cx="30" cy="30" r="26" fill="#4f9e4f" />
    <path d="M30 4a26 26 0 0 1 23 14H30a12 12 0 0 0-11 8L9 14A26 26 0 0 1 30 4z" fill="#d9503b" />
    <path d="M53 18a26 26 0 0 1-23 38l11-20a12 12 0 0 0 0-18z" fill="#f2b93a" />
    <circle cx="30" cy="30" r="13" fill="#fff" />
    <circle cx="30" cy="30" r="10.500" fill="#3d7fe6" />
  </Tile>
);
const CalendarIcon = () => (
  <svg viewBox="0 0 60 60" width="60" height="60">
    <rect width="60" height="60" rx="14" fill="#f6f6f4" />
    <path d="M0 18V14A14 14 0 0 1 14 0h32a14 14 0 0 1 14 14v4z" fill="#e4655a" />
    <text x="30" y="14" textAnchor="middle" fontSize="12" fontWeight="600" fill="#fff" fontFamily={SANS}>8月</text>
    <text x="30" y="51" textAnchor="middle" fontSize="32" fontWeight="300" fill="#2a2a2a" fontFamily={SANS}>7</text>
  </svg>
);
const Notion = () => (
  <svg viewBox="0 0 60 60" width="60" height="60">
    <path d="M0 9L44-3l15 13 0 49-45 3L-1 48z" fill="#fff" />
    <path d="M3 11L42 0l13 11v45l-39 3L3 45z" fill="#000" />
    <path d="M7 13l34-9 9 8-34 3zM18 20l33-2v34l-33 3z" fill="#fff" />
    <text x="34" y="48" textAnchor="middle" fontSize="32" fontWeight="700" fontFamily='"Liberation Serif",serif' fill="#000">N</text>
  </svg>
);
const Activity = () => (
  <svg viewBox="0 0 60 60" width="60" height="60">
    <rect x="0" y="0" width="60" height="60" rx="14" fill="#b5d2dc" />
    <rect x="2" y="2" width="56" height="56" rx="12" fill="#000" />
    <rect x="7" y="7" width="46" height="46" rx="4" fill="#1c2c26" />
    <path d="M7 17h46M7 27h46M7 37h46M7 47h46M17 7v46M27 7v46M37 7v46M47 7v46" stroke="#35493f" strokeWidth="0.700" />
    <path d="M8 33l10 1 3 2 4-26 3 40 5-17 5 2 4-6 4 6 5 2" fill="none" stroke="#7fd8bb" strokeWidth="1" />
  </svg>
);
const Reminders = () => (
  <Tile bg="#fbfbfb">
    {[['#3a7be8', 15], ['#e8473f', 30], ['#ee922c', 45]].map(([c, y]) => (
      <g key={String(c)}>
        <circle cx="12" cy={Number(y)} r="5" fill="none" stroke={String(c)} strokeWidth="1" />
        <circle cx="12" cy={Number(y)} r="3.500" fill={String(c)} />
        <path d={`M23 ${y}h30`} stroke="#c9c9c9" strokeWidth="1.600" />
      </g>
    ))}
  </Tile>
);
const Notes = () => (
  <svg viewBox="0 0 60 60" width="60" height="60">
    <rect width="60" height="60" rx="14" fill="#efeeea" />
    <path d="M0 15A14 14 0 0 1 14 0h32a14 14 0 0 1 14 14v1z" fill="#f7cf4c" />
    <path d="M0 15h60" stroke="#d9a83a" strokeWidth="1.500" />
    <path d="M0 30h60M0 45h60" stroke="#dcdbd6" strokeWidth="1.500" />
  </svg>
);
const Freeform = () => (
  <Tile bg="#fff">
    <circle cx="23" cy="37" r="17" fill="#ee7f6a" />
    <rect x="20" y="7" width="32" height="32" rx="4" fill="#6cc8f4" />
    <path d="M11 38c4-14 10-14 12-6s4 6 7-2 6-4 7 2 5 4 15-5" fill="none" stroke="#173a63" strokeWidth="3" />
  </Tile>
);
const VSCode = () => (
  <Tile bg="#fff">
    <path d="M41 4l13 6v40l-13 6z" fill="#3a96dc" />
    <path d="M41 4L16 28 7 21l-4 3 9 8-9 8 4 3 9-7 25 22 0-10-17-16 17-16z" fill="#2b6cb8" />
  </Tile>
);
const Cursor = () => (
  <Tile bg="#000">
    <path d="M30 6l17 13v21L30 54 13 40V19z" fill="#d2d2d2" />
    <path d="M30 6l17 13-17 6-17-6z" fill="#8a8a8a" />
    <path d="M13 19l17 6 0 29-17-14z" fill="#555" />
    <path d="M47 19L30 25l-2 16z" fill="#fff" />
  </Tile>
);
const Music = () => (
  <svg viewBox="0 0 60 60" width="60" height="60">
    <defs><linearGradient id="musG" x1="0" x2="0" y1="0" y2="1"><stop offset="0" stopColor="#f0687f" /><stop offset="1" stopColor="#e93a44" /></linearGradient></defs>
    <rect width="60" height="60" rx="14" fill="url(#musG)" />
    <path d="M23 15l22-5v30a6 6 0 1 1-3.500-5.500V19l-15 3.500V46a6 6 0 1 1-3.500-5.500z" fill="#fff" />
  </svg>
);
const Obsidian = () => (
  <Tile bg="#232326">
    <path d="M33 5l11 18-2 20-8 13-12-5-6-16 7-14z" fill="#a58bea" />
    <path d="M23 21l6 18 13 4-8 13-12-5-6-16z" fill="#6a45cf" />
  </Tile>
);
const AppStore = () => (
  <svg viewBox="0 0 60 60" width="60" height="60">
    <defs><linearGradient id="asG" x1="0" x2="0" y1="0" y2="1"><stop offset="0" stopColor="#41aef4" /><stop offset="1" stopColor="#1f6be6" /></linearGradient></defs>
    <rect width="60" height="60" rx="14" fill="url(#asG)" />
    <path d="M26 9l19 35M34 9L15 44M9 35h42M11 46l3-4M49 46l-3-4" stroke="#fff" strokeWidth="4.500" strokeLinecap="round" fill="none" />
  </svg>
);
const Gear = () => (
  <svg viewBox="0 0 60 60" width="60" height="60">
    <defs><linearGradient id="gearB" x1="0" x2="0" y1="0" y2="1"><stop offset="0" stopColor="#cfe0e8" /><stop offset="1" stopColor="#8e8e88" /></linearGradient></defs>
    <rect width="60" height="60" rx="14" fill="url(#gearB)" />
    <circle cx="30" cy="30" r="26" fill="#6e7070" />
    <circle cx="30" cy="30" r="25" fill="none" stroke="#2f3030" strokeWidth="3" strokeDasharray="1.500 1.500" />
    <circle cx="30" cy="30" r="20" fill="#b3b4b2" stroke="#444" strokeWidth="2" />
    <circle cx="30" cy="30" r="16" fill="#6c6e6e" />
    <path d="M30 30V14M30 30L16 38M30 30l14 8" stroke="#d4d4d4" strokeWidth="3.500" />
    <circle cx="30" cy="30" r="4" fill="#555" />
  </svg>
);
const Mirroring = () => (
  <Tile bg="#dcdcdc">
    <rect x="20" y="4" width="21" height="52" rx="4" fill="#1d1d1f" />
    <path d="M22 8h17v22L22 42z" fill="#e88f78" />
    <path d="M22 42l17-12v22H22z" fill="#2f7f9c" />
    <rect x="27" y="6" width="7" height="3" rx="1.500" fill="#000" />
  </Tile>
);
const Passwords = () => (
  <Tile bg="#fbfbfb">
    <path d="M17 14v36l4 4 3-4V14z" fill="#f3c83b" />
    <path d="M23 12v38l4 4 3-4V12z" fill="#6cc95a" />
    <path d="M30 10a11 11 0 0 1 20 7c0 5-3 8-6 10v7l-3 3 3 3-3 3 3 3-6 5-3-3V26c-3-2-5-8-5-16z" fill="#3f9af0" />
    <circle cx="40" cy="16" r="3" fill="#fff" />
  </Tile>
);
const Terminal = () => (
  <svg viewBox="0 0 60 60" width="60" height="60">
    <rect width="60" height="60" rx="14" fill="#c3dbe4" />
    <rect x="1" y="2" width="58" height="57" rx="13" fill="#000" />
    <rect x="5" y="6" width="50" height="48" rx="8" fill="#2a2a2c" />
    <path d="M11 14l7 5-7 5" fill="none" stroke="#fff" strokeWidth="2" />
    <path d="M20 27h7" stroke="#fff" strokeWidth="2.200" />
  </svg>
);
const ScriptPen = () => (
  <svg viewBox="0 0 60 60" width="60" height="60">
    <rect width="60" height="60" rx="14" fill="#f2f2f2" />
    <path d="M10 36c3-10 6-20 12-26 4 4 6 10 4 14l-8 26c-4-2-8-8-8-14z" fill="none" stroke="#9c9c9c" strokeWidth="1" />
    <path d="M54-6l5 2-11 22-20 45-2-1 18-47z" fill="#2c3238" />
  </svg>
);
const Raycast = () => (
  <svg viewBox="0 0 60 60" width="60" height="60">
    <rect x="-1" y="-1" width="62" height="62" rx="15" fill="#5c5050" />
    <rect x="2" y="2" width="56" height="56" rx="12" fill="#1b1414" />
    <path d="M2 46h56v2a10 10 0 0 1-10 10H12A10 10 0 0 1 2 48z" fill="#6a1f1c" />
    <path d="M30 8l12 12-12 12-12-12z" fill="#ff6363" />
    <path d="M30 14l6 6-6 6-6-6z" fill="#1b1414" />
    <text x="30" y="47" textAnchor="middle" fontSize="11" fill="#ffb4b0" fontFamily={SANS}>raycast</text>
  </svg>
);
const Ghost = () => (
  <Tile bg="#6c3fe0">
    <path d="M30 9c-9 0-13 8-13 18 0 12-3 16-4 19 4 4 8 0 10 0 3 4 5 6 8 4 3-4 5-2 7-1 4 2 7 0 8-3-2-4-3-8-3-19C43 17 39 9 30 9z" fill="#fff" />
    <ellipse cx="25" cy="24" rx="2.500" ry="4" fill="#111" />
    <ellipse cx="35" cy="24" rx="2.500" ry="4" fill="#111" />
  </Tile>
);
const FileDoc = () => (
  <svg viewBox="0 0 60 60" width="60" height="60">
    <path d="M12-6h24l14 18v56H12z" fill="#f6f6f6" />
    <path d="M12-6h24v10H12z" fill="#b9b9b4" opacity="0.7" />
    <path d="M36-6l14 18H36z" fill="#d9d9d9" />
  </svg>
);
const Trash = () => (
  <svg viewBox="0 0 60 60" width="60" height="60">
    <path d="M8 6c6-4 38-4 44 0l-6 58c-4 3-28 3-32 0z" fill="#dfe0dc" opacity="0.92" />
    <ellipse cx="30" cy="6" rx="22" ry="7" fill="#8f918c" />
    <path d="M14 8l6-12 6 12zM28 8l6-10 8 10z" fill="#e8e8e8" />
    <path d="M20 8l4-8 4 8zM36 8l2-6 4 6z" fill="#4a4f55" />
  </svg>
);

type TileDef = { key: string; Icon: React.FC; on: boolean };
const dockA: TileDef[] = [
  { key: 'finder', Icon: Finder, on: true },
  { key: 'launchpad', Icon: Launchpad, on: false },
  { key: 'safari', Icon: Safari, on: false },
  { key: 'mail', Icon: Mail, on: false },
  { key: 'maps', Icon: Maps, on: false },
  { key: 'photos', Icon: Photos, on: false },
  { key: 'dome', Icon: Dome, on: true },
  { key: 'brave', Icon: Brave, on: true },
  { key: 'chrome', Icon: ChromeMark, on: true },
  { key: 'calendar', Icon: CalendarIcon, on: false },
  { key: 'notion', Icon: Notion, on: false },
  { key: 'activity', Icon: Activity, on: true },
  { key: 'reminders', Icon: Reminders, on: false },
  { key: 'notes', Icon: Notes, on: true },
  { key: 'freeform', Icon: Freeform, on: true },
  { key: 'vscode', Icon: VSCode, on: true },
  { key: 'cursor', Icon: Cursor, on: true },
  { key: 'music', Icon: Music, on: false },
  { key: 'obsidian', Icon: Obsidian, on: true },
  { key: 'appstore', Icon: AppStore, on: true },
  { key: 'settings', Icon: Gear, on: true },
  { key: 'mirroring', Icon: Mirroring, on: false },
];
const dockB: TileDef[] = [
  { key: 'passwords', Icon: Passwords, on: true },
  { key: 'terminal', Icon: Terminal, on: true },
  { key: 'pen', Icon: ScriptPen, on: true },
  { key: 'raycast', Icon: Raycast, on: true },
  { key: 'ghost', Icon: Ghost, on: true },
];
const dockC: TileDef[] = [
  { key: 'file', Icon: FileDoc, on: false },
  { key: 'trash', Icon: Trash, on: false },
];
const renderTiles = (list: TileDef[]) =>
  list.map(({ key, Icon, on }) => (
    <DockTile key={key}>
      <Icon />
      <DockDot $on={on} />
    </DockTile>
  ));

const menuItems: [string, number, number][] = [
  ['ファイル', 96, 40],
  ['編集', 48, 42],
  ['表示', 48, 42],
  ['履歴', 48, 42],
  ['ブックマーク', 141, 43],
  ['プロファイル', 144, 44],
  ['タブ', 46, 42],
  ['ウィンドウ', 120, 44],
  ['ヘルプ', 71, 41],
];

const LoadingCard = ({ angle }: { angle: number }) => (
  <Card>
    <Title>
      <TitleBall><Crystal /></TitleBall>HAQEI - 未来分岐シミュレータ<br />ー
    </Title>
    <Spinner $angle={angle} />
    <Subtitle>あなたの未来シミュレーションを開始します</Subtitle>
    <Redirect>2秒後に自動でページを移動します...</Redirect>
    <GoButton>すぐに移動する</GoButton>
  </Card>
);

const TAB_TITLE = 'HAQEI - 未来分岐シミュレーター';

export default function App() {
  return (
    <Desktop>
      <Global />
      <MenuBar>
        <MenuApple><FaApple size={30} /></MenuApple>
        <MenuApp>Chrome</MenuApp>
        {menuItems.map(([t, w, ml]) => <MenuLabel key={t} $w={w} $ml={ml}>{t}</MenuLabel>)}
        <MenuRight>
          <MenuSlot $w={32} $ml={0}><DriveGlyph /></MenuSlot>
          <MenuSlot $w={32} $ml={38}><RotateGlyph /></MenuSlot>
          <MenuSlot $w={29} $ml={41}><ClipGlyph /></MenuSlot>
          <MenuSlot $w={32} $ml={42}><SGlyph>S</SGlyph></MenuSlot>
          <MenuSlot $w={31} $ml={44}><CloudGlyph /></MenuSlot>
          <MenuSlot $w={60} $ml={8}>32°C</MenuSlot>
          <MenuSlot $w={42} $ml={49}><BellGlyph /></MenuSlot>
          <MenuSlot $w={44} $ml={48}><AGlyph>A</AGlyph></MenuSlot>
          <MenuSlot $w={28} $ml={40}><PlayGlyph /></MenuSlot>
          <MenuSlot $w={57} $ml={37}>100%</MenuSlot>
          <MenuSlot $w={50} $ml={10}><BatteryGlyph /></MenuSlot>
          <MenuSlot $w={43} $ml={35}><LinkGlyph /></MenuSlot>
          <MenuSlot $w={26} $ml={35}><Search size={30} strokeWidth={2.2} color="#eeeeea" /></MenuSlot>
          <MenuSlot $w={27} $ml={40}><ControlGlyph /></MenuSlot>
          <MenuSlot $w={29} $ml={36}><SiriGlyph /></MenuSlot>
          <MenuSlot $w={128} $ml={34}>8月7日 (木)</MenuSlot>
          <MenuSlot $w={69} $ml={18} $ls={0.7}>13:45</MenuSlot>
        </MenuRight>
      </MenuBar>

      <WhiteBase><WhitePanel /></WhiteBase>

      <RightWindow>
        <RightTabs>
          <FaviconSlot><PortraitFav /></FaviconSlot>
          <FaviconSlot><PortraitFav /></FaviconSlot>
          <FaviconSlot><ShieldFav /></FaviconSlot>
          <FaviconSlot><GreyFavicon $c="#c0c5cb" /></FaviconSlot>
          <FaviconSlot><ShieldFav /></FaviconSlot>
          <FaviconSlot><ShieldFav /></FaviconSlot>
          <RightActiveTab><GreyFavicon $c="#dcdcdc" /></RightActiveTab>
          <RightTabTool $ml="24px"><Plus size={28} strokeWidth={2} /></RightTabTool>
          <RightTabTool $ml="auto" $mr={28}><ChevronDown size={32} strokeWidth={2} /></RightTabTool>
        </RightTabs>
        <RightToolbar>
          <HexLogo />
          <ChatButton><ChatBubble />Chat</ChatButton>
        </RightToolbar>
        <RightBookmarks>
          <MarkText $ml={0} $w={226}>Chat | Google AI St...</MarkText>
          <MarkIcon $w={34} $ml={34}><SiCloudflare size={32} color="#f08a33" /></MarkIcon>
          <MarkText $ml={11} $w={200} $ls={-0.9}>アカウント ホーム |...</MarkText>
          <MarkIcon $w={32} $ml={60}><XBadge><FaXTwitter size={22} /></XBadge></MarkIcon>
        </RightBookmarks>
        <GradientStage $top={388}><LoadingCard angle={-30} /></GradientStage>
        <RightFoot />
      </RightWindow>

      <PurpleWindow><PurpleInset /></PurpleWindow>
      <TerminalWindow><TerminalTick /></TerminalWindow>

      <ChromeWindow>
        <TabStrip>
          <Lights>
            <Light $c="#ee6a5f" />
            <Light $c="#f5bd4f" />
            <Light $c="#61c554" />
          </Lights>
          <Tab>
            <TabFavicon>易</TabFavicon>
            <TabTitle>{TAB_TITLE}</TabTitle>
            <TabClose><X size={24} strokeWidth={2} /></TabClose>
          </Tab>
          <Tab $active>
            <TabFavicon>易</TabFavicon>
            <TabTitle>{TAB_TITLE}</TabTitle>
            <TabClose><X size={24} strokeWidth={2} /></TabClose>
          </Tab>
          <NewTab><Plus size={28} strokeWidth={2} /></NewTab>
          <TabMenu><ChevronDown size={28} strokeWidth={2} /></TabMenu>
        </TabStrip>
        <Toolbar>
          <ToolIcon $w={32} $ml={28} $dim><ArrowLeft size={32} strokeWidth={2} /></ToolIcon>
          <ToolIcon $w={32} $ml={40} $dim><ArrowRight size={32} strokeWidth={2} /></ToolIcon>
          <ToolIcon $w={32} $ml={40}><RotateCw size={28} strokeWidth={2.2} /></ToolIcon>
          <AddressBar $w={1176} $ml={36}>
            <InfoChip><Info size={28} strokeWidth={2.2} /></InfoChip>
            localhost:8788/future_simulator
            <AddressStar><Star size={30} strokeWidth={2.2} /></AddressStar>
          </AddressBar>
          <ToolIcon $w={36} $ml={36}><Puzzle size={34} strokeWidth={2} /></ToolIcon>
          <ToolDivider />
          <Avatar>H</Avatar>
          <UpdatePill>
            再起動して更新する
            <PillDots><EllipsisVertical size={30} strokeWidth={3} /></PillDots>
          </UpdatePill>
        </Toolbar>
        <BookmarkBar>
          <AppsIcon><Grid4 /></AppsIcon>
          <BarDivider />
          <MarkIcon $w={30} $ml={30}><Gem s={30} /></MarkIcon>
          <MarkText $ml={13} $w={78} $fs={23.5}>Gemini</MarkText>
          <MarkIcon $w={32} $ml={34}><WallMark /></MarkIcon>
          <MarkText $ml={10} $w={135}>アイデアの壁</MarkText>
          <MarkIcon $w={26} $ml={37}><MarkBall><Crystal /></MarkBall></MarkIcon>
          <MarkText $ml={17} $w={133}>[HaQei 分析]</MarkText>
          <MarkIcon $w={32} $ml={34}><SheetMark /></MarkIcon>
          <MarkText $ml={13} $w={64}>ホーム</MarkText>
          <MarkIcon $w={30} $ml={36}><GmailMark /></MarkIcon>
          <MarkText $ml={12} $w={110}>受信トレイ</MarkText>
          <MarkIcon $w={32} $ml={35}><Diamond /></MarkIcon>
          <MarkText $ml={11} $w={218} $fs={23.5}>Project overview |...</MarkText>
          <MarkIcon $w={32} $ml={46}><FaGithub size={32} color="#eef0ea" /></MarkIcon>
          <MarkText $ml={12} $w={228} $fs={23.5}>hidenaka/haqei-an...</MarkText>
          <MarkIcon $w={30} $ml={222}><ChevronsRight size={28} color="#c7d0c0" strokeWidth={2} /></MarkIcon>
        </BookmarkBar>
        <GradientStage $top={375}><LoadingCard angle={145} /></GradientStage>
      </ChromeWindow>

      <SmallWindow>
        <SmallTabs>
          <SmallLight /><SmallLight /><SmallLight />
          <MarkIcon $w={30} $ml={41}><Gem s={30} /></MarkIcon>
          <SmallTabText $ml={18}>Gemini</SmallTabText>
          <MarkIcon $w={24} $ml={24}><X size={24} /></MarkIcon>
          <SmallDivider />
          <MarkIcon $w={30} $ml={23}><Gem s={30} /></MarkIcon>
          <SmallTabText $ml={17}>Gemini</SmallTabText>
          <MarkIcon $w={24} $ml={20}><X size={24} /></MarkIcon>
        </SmallTabs>
        <SmallToolbar>
          <AddressBar $w={400} $ml={0}>
            <InfoChip><Info size={28} strokeWidth={2.2} /></InfoChip>
            localhost:8788/future_simulator
          </AddressBar>
        </SmallToolbar>
        <SmallMarks>
          <MarkIcon $w={32} $ml={283}><WallMark /></MarkIcon>
          <MarkText $ml={13} $w={132}>アイデアの壁</MarkText>
        </SmallMarks>
      </SmallWindow>

      <Dock>
        {renderTiles(dockA)}
        <DockDivider $mr={6} />
        {renderTiles(dockB)}
        <DockDivider $mr={5} />
        {renderTiles(dockC)}
      </Dock>
    </Desktop>
  );
}
